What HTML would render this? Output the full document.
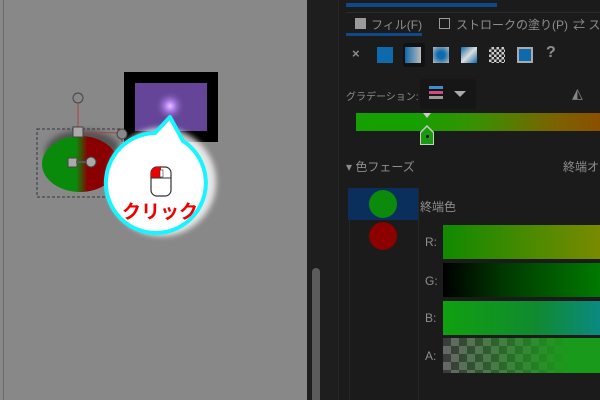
<!DOCTYPE html>
<html><head><meta charset="utf-8"><style>
*{margin:0;padding:0;box-sizing:border-box}
body{width:600px;height:400px;overflow:hidden;background:#1b1b1b;position:relative;font-family:"Liberation Sans","Noto Sans CJK JP",sans-serif}
.a{position:absolute}
.t{color:#8e8e8e;font-size:12px;position:absolute;white-space:nowrap}
</style></head><body>
<div class="a" style="left:0;top:0;width:307px;height:400px;background:#888"></div>
<div class="a" style="left:3px;top:0;width:1px;height:400px;background:#6a6a6a"></div>
<div class="a" style="left:307px;top:0;width:31px;height:400px;background:#1e1e1e"></div>
<div class="a" style="left:312px;top:268px;width:8px;height:132px;background:#5c5c5c;border-radius:4px 4px 0 0"></div>
<div class="a" style="left:338px;top:0;width:1px;height:400px;background:#262626"></div>
<div class="a" style="left:346px;top:3px;width:151px;height:4px;background:#0e4a8a"></div>
<div class="a" style="left:346px;top:12px;width:254px;height:1px;background:#2a2a2a"></div>
<div class="a" style="left:355px;top:18px;width:11px;height:11px;background:#9a9a9a"></div>
<div class="t" style="left:371px;top:16px">フィル(F)</div>
<div class="a" style="left:439px;top:18px;width:11px;height:11px;border:1px solid #9a9a9a"></div>
<div class="t" style="left:456px;top:16px">ストロークの塗り(P)</div>
<div class="t" style="left:573px;top:16px">⇄ ス</div>
<div class="a" style="left:346px;top:33px;width:76px;height:3px;background:#0e4a8a"></div>
<div class="t" style="left:352px;top:46px;font-weight:bold;font-size:13px">×</div>
<div class="a" style="left:377px;top:47px;width:16px;height:16px;background:#0d6aad"></div>
<div class="a" style="left:403px;top:43px;width:22px;height:24px;background:#111;border-radius:3px"></div>
<div class="a" style="left:405px;top:47px;width:16px;height:16px;background:linear-gradient(90deg,#0d6aad,#bbb)"></div>
<div class="a" style="left:433px;top:47px;width:16px;height:16px;background:radial-gradient(circle,#0d6aad 30%,#bbb)"></div>
<div class="a" style="left:461px;top:47px;width:16px;height:16px;background:linear-gradient(135deg,#0d6aad,#ddd,#0d6aad)"></div>
<div class="a" style="left:489px;top:47px;width:16px;height:16px;background:repeating-conic-gradient(#ccc 0 25%,#222 0 50%) 0 0/5px 5px"></div>
<div class="a" style="left:517px;top:47px;width:16px;height:16px;border:2px solid #aaa;background:#0d6aad"></div>
<div class="t" style="left:546px;top:44px;font-weight:bold;font-size:16px">?</div>
<div class="t" style="left:346px;top:88px;font-size:10px">グラデーション:</div>
<div class="a" style="left:420px;top:79px;width:56px;height:30px;background:#161616;border-radius:3px"></div>
<div class="a" style="left:429px;top:86px;width:14px;height:3px;background:#3a8fd0"></div>
<div class="a" style="left:429px;top:91px;width:14px;height:3px;background:#d04a80"></div>
<div class="a" style="left:429px;top:96px;width:14px;height:3px;background:#999"></div>
<div class="a" style="left:454px;top:91px;border:6px solid transparent;border-top:6px solid #aaa"></div>
<div class="t" style="left:572px;top:85px;font-size:14px;color:#888">◭</div>
<div class="a" style="left:356px;top:113px;width:244px;height:18px;background:linear-gradient(90deg,#16a000 25%,#3a9000 50%,#7a6400 80%,#8a5000)"></div>
<div class="a" style="left:423px;top:113px;border:4px solid transparent;border-top:5px solid #ccc"></div>
<div class="a" style="left:420px;top:125px;width:14px;height:20px;background:#ccc;clip-path:polygon(50% 0,100% 35%,100% 100%,0 100%,0 35%)"></div>
<div class="a" style="left:421px;top:127px;width:12px;height:17px;background:#1a9a10;clip-path:polygon(50% 0,100% 35%,100% 100%,0 100%,0 35%)"></div>
<div class="a" style="left:426px;top:135px;width:3px;height:3px;background:#111;border-radius:50%"></div>
<div class="t" style="left:346px;top:158px">▾ 色フェーズ</div>
<div class="t" style="left:563px;top:158px">終端オ</div>
<div class="a" style="left:348px;top:188px;width:70px;height:32px;background:#0b2f5c"></div>
<div class="a" style="left:369px;top:190px;width:28px;height:28px;background:#0b8a0b;border-radius:50%"></div>
<div class="a" style="left:369px;top:222px;width:28px;height:28px;background:#8c0000;border-radius:50%"></div>
<div class="a" style="left:349px;top:220px;width:1px;height:180px;background:#262626"></div>
<div class="a" style="left:418px;top:188px;width:1px;height:212px;background:#262626"></div>
<div class="t" style="left:420px;top:198px">終端色</div>
<div class="t" style="left:425px;top:235px">R:</div>
<div class="t" style="left:425px;top:274px">G:</div>
<div class="t" style="left:425px;top:311px">B:</div>
<div class="t" style="left:425px;top:349px">A:</div>
<div class="a" style="left:443px;top:225px;width:157px;height:34px;background:linear-gradient(90deg,#108a00,#5a8a00 70%,#7a8a00)"></div>
<div class="a" style="left:443px;top:263px;width:157px;height:34px;background:linear-gradient(90deg,#000,#003a00 40%,#007a00)"></div>
<div class="a" style="left:443px;top:301px;width:157px;height:34px;background:linear-gradient(90deg,#10a010,#108a30 60%,#0a8a80)"></div>
<div class="a" style="left:443px;top:338px;width:157px;height:35px;background:linear-gradient(90deg,rgba(20,140,20,0),#1a9a1a 80%),repeating-conic-gradient(#666 0 25%,#3a3a3a 0 50%) 0 0/16px 16px"></div>
<svg class="a" style="left:0;top:0" width="307" height="400">
<defs><linearGradient id="g" x1="0" x2="1"><stop offset="0.45" stop-color="#0a8a0a"/><stop offset="0.6" stop-color="#8a0000"/></linearGradient>
<radialGradient id="p"><stop offset="0" stop-color="#e6c8ff"/><stop offset="0.3" stop-color="#b080f0"/><stop offset="1" stop-color="#6a4a9a" stop-opacity="0"/></radialGradient>
<filter id="b"><feGaussianBlur stdDeviation="3"/></filter></defs>
<rect x="124" y="72" width="94" height="70" fill="#000"/>
<rect x="135" y="83" width="72" height="48" fill="#654597"/>
<circle cx="170" cy="106" r="15" fill="url(#p)"/>
<ellipse cx="83" cy="152" rx="38" ry="22" fill="#333" opacity=".6" filter="url(#b)"/>
<ellipse cx="80" cy="164" rx="38" ry="28" fill="url(#g)"/>
<rect x="37" y="129" width="85" height="68" fill="none" stroke="#334" stroke-dasharray="3,2"/>
<line x1="78" y1="104" x2="78" y2="133" stroke="#a44"/>
<line x1="78" y1="132" x2="122" y2="133" stroke="#a44"/>
<circle cx="78" cy="98" r="5" fill="none" stroke="#444"/>
<circle cx="122" cy="134" r="5" fill="#888" stroke="#444"/>
<rect x="73" y="127" width="10" height="10" fill="#aaa" stroke="#444"/>
<rect x="68" y="158" width="9" height="9" fill="#aaa" stroke="#444"/>
<circle cx="91" cy="162" r="5" fill="#aaa" stroke="#444"/>
<line x1="76" y1="162" x2="87" y2="162" stroke="#556" stroke-width="2"/>
<g filter="url(#b)" opacity=".8"><circle cx="162" cy="182" r="54" fill="#fff"/></g>
<path d="M170 117 L183 141 A50 50 0 1 1 155 133 Z" fill="#fff" stroke="#19f5ff" stroke-width="4" stroke-linejoin="round"/>
<rect x="151" y="167" width="20" height="29" rx="6" fill="#fff" stroke="#333" stroke-width="1.2"/>
<path d="M151 178 V173 a6 6 0 0 1 6 -6 H161 V178Z" fill="#e00"/>
<line x1="151" y1="178" x2="171" y2="178" stroke="#333"/>
<rect x="160" y="170" width="3" height="7" fill="#fff" stroke="#333" stroke-width=".6"/>
<text x="160" y="218" text-anchor="middle" fill="#e00" font-size="19" font-weight="bold" font-family="Noto Sans CJK JP,sans-serif">クリック</text>
</svg>
</body></html>
